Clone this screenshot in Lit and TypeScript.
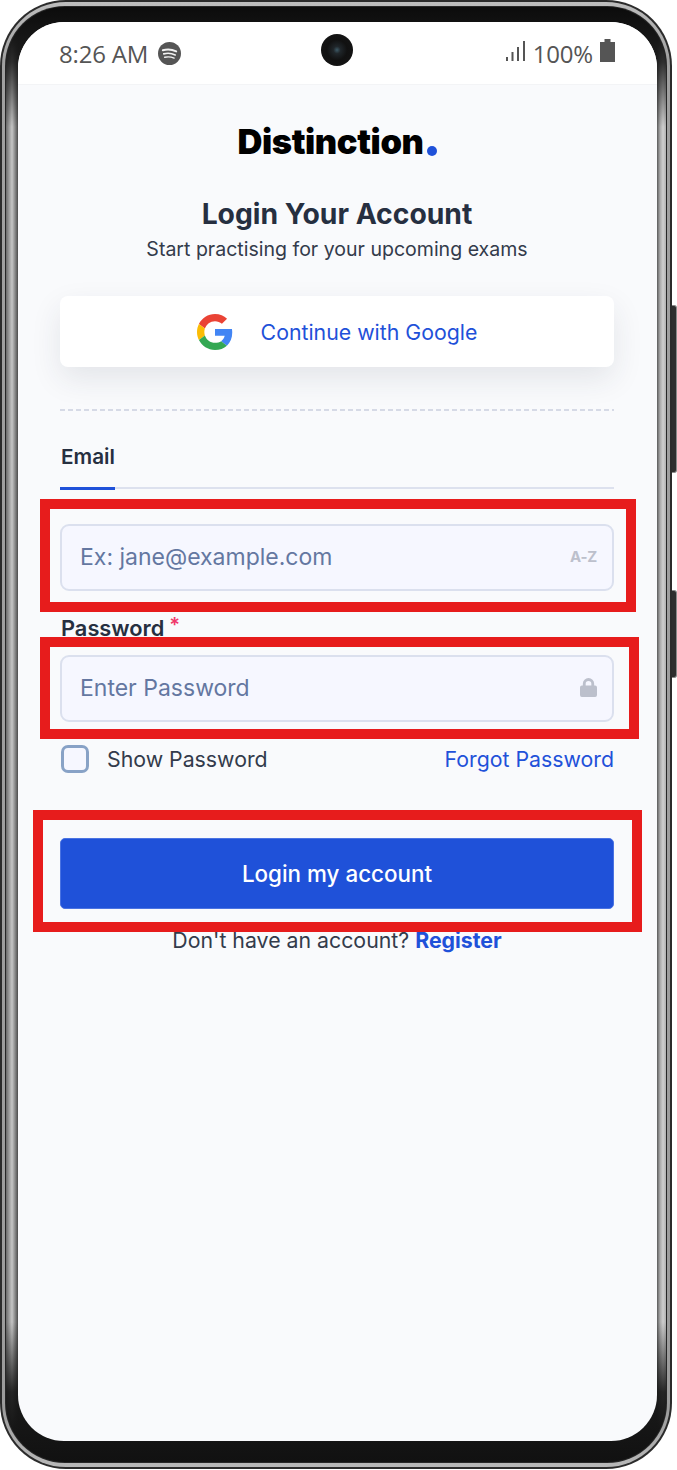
import { LitElement, html, css } from "lit";
import { customElement } from "lit/decorators.js";

@customElement("app-root")
export class AppRoot extends LitElement {
  static styles = css`
    :host { display: block; width: 677px; height: 1470px; background: #fff; position: relative; overflow: hidden; font-family: Inter, "Liberation Sans", sans-serif; }
    * { box-sizing: border-box; }
    .outer { width: 672px; height: 1469px; padding: 2px; border-radius: 66px; background: #2b2b2b; }
    .rim { height: 100%; padding: 4px 3px 4px 3px; border-radius: 64px; background: linear-gradient(180deg, #bdbdbd 0, #a0a0a0 60px, #9c9c9c calc(100% - 60px), #b8b8b8 100%); }
    .line { height: 100%; padding: 1px; border-radius: 60px; background: #262626; }
    .bezel { height: 100%; padding: 15px 9px 21px 12px; border-radius: 59px;
      background: linear-gradient(180deg, #0c0c0c 0, #161616 30px, rgba(20,20,20,.85) 55px, rgba(20,20,20,0) 120px, rgba(20,20,20,0) calc(100% - 140px), rgba(20,20,20,.9) calc(100% - 70px), #151515 calc(100% - 30px), #111 100%),
        linear-gradient(90deg, #6a6a6a 0, #9a9a9a 3px, #c6c6c6 6px, #8a8a8a 9px, #4c4c4c 12px, #5a5a5a calc(100% - 9px), #a8a8a8 calc(100% - 6px), #cfcfcf calc(100% - 3px), #b0b0b0 100%); }
    .screen { height: 100%; border-radius: 46px; overflow: hidden; background: #f9fafc; position: relative; }
    .status { height: 63px; background: #fff; border-bottom: 1px solid #f3f4f6; display: flex; align-items: center; padding: 2px 42px 0 41px; color: #555; font: 400 24px/1 "Open Sans", sans-serif; position: relative; }
    .time { margin-right: 10px; letter-spacing: -.2px; }
    .spacer { flex: 1; }
    .pct { margin: 0 7px 0 7px; letter-spacing: -.2px; }
    .spot, .bars, .batt { display: block; flex: none; }
    .spot { margin-bottom: 2px; }
    .bars { margin-bottom: 6px; }
    .batt { margin-bottom: 8px; }
    .camera { position: absolute; left: 303px; top: 12px; width: 32px; height: 32px; border-radius: 50%; background: radial-gradient(circle at 50% 50%, #3d5a66 0, #20262a 16%, #111 45%, #161616 100%); }
    .content { padding: 0 43px 0 42px; display: flex; flex-direction: column; }
    .logo { align-self: center; margin-top: 37px; font-size: 34.5px; line-height: 40px; font-weight: 900; color: #000; letter-spacing: -.4px; display: flex; }
    .logo i { width: 10px; height: 10px; border-radius: 50%; background: #1f51d9; align-self: flex-end; margin: 0 0 6px 3px; }
    h1 { margin: 34px 0 0; font-size: 28.3px; line-height: 36px; font-weight: 700; color: #262f40; text-align: center; }
    .sub { margin: 4px 0 0; font-size: 19.55px; line-height: 26px; color: #333b4b; text-align: center; }
    .google { margin-top: 34px; height: 71px; border-radius: 8px; background: #fff; box-shadow: 0 12px 30px rgba(40,50,70,.1); display: flex; align-items: center; justify-content: center; gap: 28px; color: #1f51d9; font-size: 21.3px; }
    .dash { margin-top: 42px; height: 2px; background: repeating-linear-gradient(90deg, #d6dae6 0 5px, transparent 5px 8px); }
    .tab { margin-top: 34px; font-size: 20.7px; line-height: 24px; font-weight: 600; color: #262f40; padding-left: 1px; }
    .track { margin-top: 18px; height: 3px; position: relative; }
    .track::before { content: ""; display: block; height: 2px; background: #dde1ee; }
    .track b { position: absolute; left: 0; top: 0; width: 55px; height: 3px; background: #1f51d9; }
    .input { height: 67px; border: 2px solid #dbe0ee; border-radius: 9px; background: #f6f7ff; display: flex; align-items: center; justify-content: space-between; padding: 0 15px 2px 18px; font-size: 23px; color: #6477a1; }
    .i1 { margin-top: 34px; }
    .az { font-size: 15px; font-weight: 700; color: #bcc0cc; letter-spacing: -.2px; }
    .label { margin-top: 24px; font-size: 21.8px; line-height: 26px; font-weight: 600; color: #262f40; padding-left: 1px; display: flex; }
    .label em { font-style: normal; color: #f0386b; font-size: 20px; line-height: 20px; margin-left: 5px; }
    .i2 { margin-top: 14px; }
    .row { margin-top: 22px; display: flex; align-items: center; justify-content: space-between; font-size: 21.3px; line-height: 30px; color: #333b4b; }
    .check { display: flex; align-items: center; gap: 18px; padding-left: 1px; }
    .box { width: 28px; height: 28px; border: 3.5px solid #88a2c6; border-radius: 7px; background: #f6f7ff; }
    a { color: #1f51d9; text-decoration: none; }
    .btn { margin-top: 64px; height: 71px; border-radius: 5px; background: #1f51d9; border: 1px solid #4a73e2; color: #fff; font-size: 22.4px; font-weight: 500; display: flex; align-items: center; justify-content: center; }
    .foot { margin-top: 16px; text-align: center; font-size: 21.3px; line-height: 30px; color: #333b4b; }
    .foot a { font-weight: 700; }
    .red { position: absolute; border: 10px solid #e71c1c; }
    .r1 { left: 40px; top: 499px; width: 596px; height: 113px; }
    .r2 { left: 40px; top: 637px; width: 599px; height: 102px; }
    .r3 { left: 33px; top: 810px; width: 609px; height: 122px; }
    .side { position: absolute; left: 672px; width: 5px; background: #2e2e2e; border: 1px solid #8a8a8a; border-left: 0; border-radius: 0 3px 3px 0; }
    .s1 { top: 305px; height: 168px; }
    .s2 { top: 590px; height: 88px; }
  `;

  render() {
    return html`
      <div class="outer"><div class="rim"><div class="line"><div class="bezel">
        <div class="screen">
          <div class="status">
            <span class="time">8:26 AM</span>
            <svg class="spot" width="23" height="23" viewBox="0 0 24 24"><circle cx="12" cy="12" r="12" fill="#555"/><g fill="none" stroke="#f2f2f2" stroke-linecap="round"><path d="M5 8.6c4.6-1.4 9.6-1 14 1.2" stroke-width="2"/><path d="M6 12.4c4-1.1 8.2-.7 12 1.1" stroke-width="1.7"/><path d="M7 15.9c3.3-.8 6.7-.5 9.8.9" stroke-width="1.4"/></g></svg>
            <span class="spacer"></span>
            <svg class="bars" width="20" height="21" viewBox="0 0 20 21" fill="#555"><rect x="0" y="16" width="2" height="4"/><rect x="5.5" y="11" width="2" height="9"/><rect x="11" y="6" width="2" height="14"/><rect x="17" y="0" width="2" height="20"/></svg>
            <span class="pct">100%</span>
            <svg class="batt" width="15" height="23" viewBox="0 0 15 23" fill="#555"><path d="M4.5 0h6v3H15v20H0V3h4.5z"/></svg>
            <div class="camera"></div>
          </div>
          <div class="content">
            <div class="logo">Distinction<i></i></div>
            <h1>Login Your Account</h1>
            <p class="sub">Start practising for your upcoming exams</p>
            <div class="google">
              <svg width="36" height="36" viewBox="0 0 48 48"><path fill="#EA4335" d="M24 9.5c3.54 0 6.71 1.22 9.21 3.6l6.85-6.85C35.9 2.38 30.47 0 24 0 14.62 0 6.51 5.38 2.56 13.22l7.98 6.19C12.43 13.72 17.74 9.5 24 9.5z"/><path fill="#4285F4" d="M46.98 24.55c0-1.57-.15-3.09-.38-4.55H24v9.02h12.94c-.58 2.96-2.26 5.48-4.78 7.18l7.73 6c4.51-4.18 7.09-10.36 7.09-17.65z"/><path fill="#FBBC05" d="M10.53 28.59c-.48-1.45-.76-2.99-.76-4.59s.27-3.14.76-4.59l-7.98-6.19C.92 16.46 0 20.12 0 24c0 3.88.92 7.54 2.56 10.78l7.97-6.19z"/><path fill="#34A853" d="M24 48c6.48 0 11.93-2.13 15.89-5.81l-7.73-6c-2.15 1.45-4.92 2.3-8.16 2.3-6.26 0-11.57-4.22-13.47-9.91l-7.98 6.19C6.51 42.62 14.62 48 24 48z"/></svg>
              <span>Continue with Google</span>
            </div>
            <div class="dash"></div>
            <div class="tab">Email</div>
            <div class="track"><b></b></div>
            <div class="input i1"><span>Ex: jane@example.com</span><span class="az">A-Z</span></div>
            <div class="label">Password<em>*</em></div>
            <div class="input i2"><span>Enter Password</span>
              <svg width="17" height="19" viewBox="0 0 18 20"><path fill="#bcc0cc" d="M3 8V6a6 6 0 0 1 12 0v2h1a2 2 0 0 1 2 2v8a2 2 0 0 1-2 2H2a2 2 0 0 1-2-2v-8a2 2 0 0 1 2-2zm3 0h6V6a3 3 0 0 0-6 0z"/></svg>
            </div>
            <div class="row">
              <span class="check"><span class="box"></span>Show Password</span>
              <a>Forgot Password</a>
            </div>
            <div class="btn">Login my account</div>
            <div class="foot">Don't have an account? <a>Register</a></div>
          </div>
        </div>
      </div></div></div></div>
      <div class="side s1"></div><div class="side s2"></div>
      <div class="red r1"></div><div class="red r2"></div><div class="red r3"></div>
    `;
  }
}
